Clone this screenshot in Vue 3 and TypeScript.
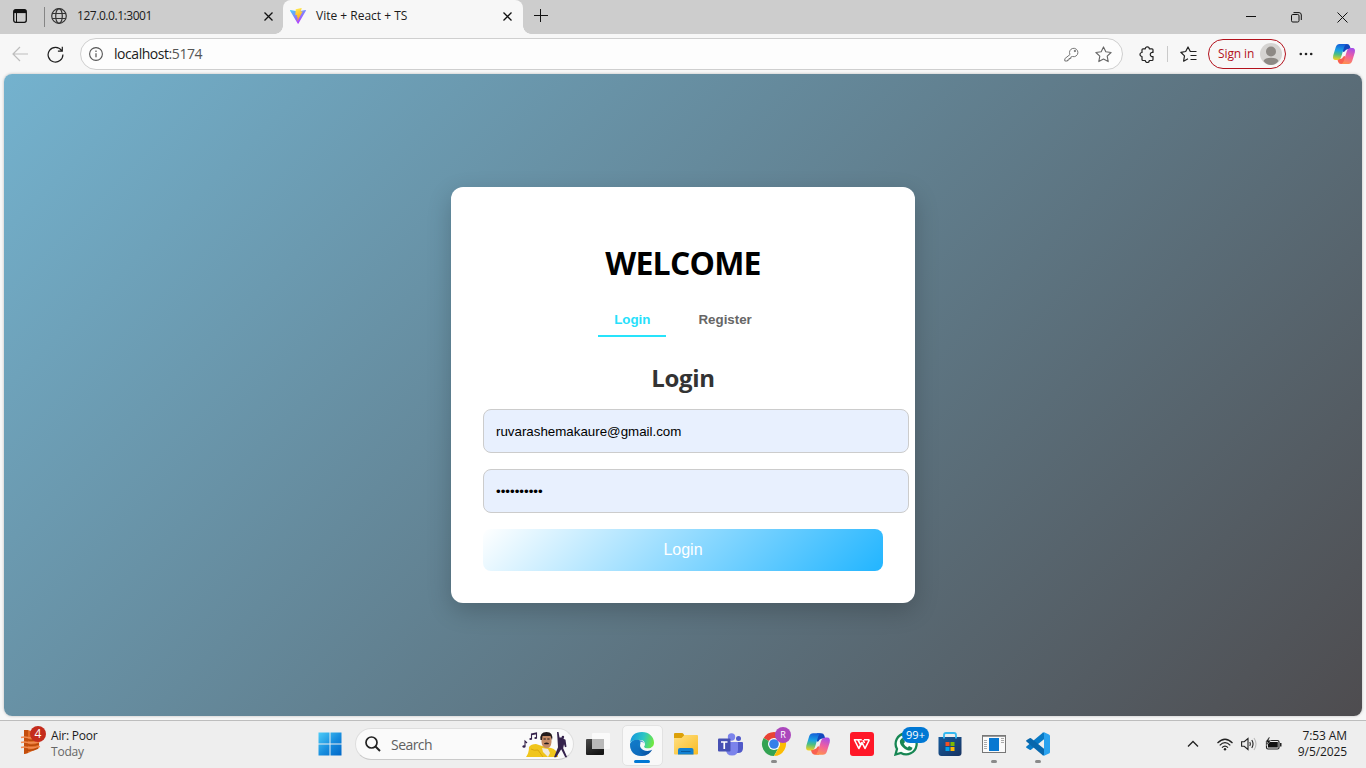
<script setup lang="ts">
import { ref } from 'vue'

type Mode = 'Login' | 'Register'
const modes: Mode[] = ['Login', 'Register']
const mode = ref<Mode>('Login')
const email = ref('ruvarashemakaure@gmail.com')
const password = '••••••••••'
</script>

<template>
  <div class="screen">
    <svg class="defs" width="0" height="0" aria-hidden="true">
      <defs>
        <linearGradient id="cpA" x1=".4" y1="0" x2="0.3" y2="1">
          <stop offset="0" stop-color="#1560d8" /><stop offset=".4" stop-color="#1aa2e4" />
          <stop offset=".65" stop-color="#4dbf80" /><stop offset="1" stop-color="#f5d21f" />
        </linearGradient>
        <linearGradient id="cpB" x1=".6" y1="0" x2=".3" y2="1">
          <stop offset="0" stop-color="#ff8f50" /><stop offset=".5" stop-color="#f0609f" />
          <stop offset="1" stop-color="#a64de8" />
        </linearGradient>
        <symbol id="copilot" viewBox="0 0 24 24">
          <path d="M11 2h4q2.200 0 2.900 2.300L18.700 7H16.500Q13.500 7 12.600 9.500L11 10z" fill="#1448bd" />
          <path d="M11 2h4q2.200 0 2.900 2.300L18.700 7H16.500Q13.500 7 12.600 9.500L11 10z" fill="#f9604f" transform="rotate(180 12 12)" />
          <path d="M7.500 2H15q-2 .3-2.800 3L9.300 14.500Q8.300 18 5 18H3.500Q.3 18 1.200 13.500L3.800 5Q4.800 2 7.500 2z" fill="url(#cpA)" />
          <path d="M7.500 2H15q-2 .3-2.800 3L9.300 14.500Q8.300 18 5 18H3.500Q.3 18 1.200 13.500L3.800 5Q4.800 2 7.500 2z" fill="url(#cpB)" transform="rotate(180 12 12)" />
        </symbol>
      </defs>
    </svg>

    <header class="tabstrip">
      <svg class="ws" width="14" height="14" viewBox="0 0 14 14" fill="none" stroke="#111">
        <rect x=".7" y=".7" width="12.600" height="12.600" rx="2" stroke-width="1.300" />
        <path d="M1 2.500h12" stroke-width="3.200" /><path d="M3.500 4v9" />
      </svg>
      <i class="split"></i>
      <div class="tab old">
        <svg width="16" height="16" viewBox="0 0 16 16" fill="none" stroke="#333" stroke-width="1.200">
          <circle cx="8" cy="8" r="7.300" /><ellipse cx="8" cy="8" rx="3.300" ry="7.300" /><path d="M1.200 5.500h13.600M1.200 10.500h13.600" />
        </svg>
        <span class="t1">127.0.0.1:3001</span>
        <svg class="x" width="9" height="9" viewBox="0 0 9 9" stroke="#111" stroke-width="1.300"><path d="m.5.5 8 8m0-8-8 8" /></svg>
      </div>
      <div class="tab active">
        <svg width="16" height="16" viewBox="0 0 32 32">
          <defs>
            <linearGradient id="v1" x1="0" y1="0" x2=".6" y2="1"><stop stop-color="#41d1ff" /><stop offset="1" stop-color="#bd34fe" /></linearGradient>
            <linearGradient id="v2" x1=".4" y1="0" x2=".6" y2="1"><stop stop-color="#ffea50" /><stop offset="1" stop-color="#ff9c10" /></linearGradient>
          </defs>
          <path d="M31.800 5.500 17 31.200a1 1 0 0 1-1.700 0L.2 5.500a1 1 0 0 1 1-1.500L16 6.800 30.700 4a1 1 0 0 1 1.100 1.500z" fill="url(#v1)" />
          <path d="m22.800.1-11 2.200a.5.5 0 0 0-.4.400l-.7 11.500c0 .3.300.5.600.4l3-.7-.9 4.500c0 .4.200.6.500.5l1.900-.6-1.500 7c0 .5.500.7.800.3L25 7.300c.1-.4-.1-.7-.5-.6l-3.200.6 2-6.700c.1-.3-.2-.6-.5-.5z" fill="url(#v2)" />
        </svg>
        <span class="t2">Vite + React + TS</span>
        <svg class="x" width="9" height="9" viewBox="0 0 9 9" stroke="#111" stroke-width="1.300"><path d="m.5.5 8 8m0-8-8 8" /></svg>
      </div>
      <svg class="plus" width="14" height="14" viewBox="0 0 14 14" stroke="#111"><path d="M6.500 0v13M0 6.500h14" /></svg>
      <div class="winctl">
        <svg width="10" height="10" viewBox="0 0 10 10" stroke="#111"><path d="M0 4.500h10" /></svg>
        <svg width="11" height="11" viewBox="0 0 11 11" fill="none" stroke="#111"><rect x=".5" y="2.500" width="7.500" height="7.500" rx="1.300" /><path d="M2.500.6H8Q10.300.6 10.300 3v5" /></svg>
        <svg width="11" height="11" viewBox="0 0 11 11" stroke="#111"><path d="m.5.5 10 10m0-10-10 10" /></svg>
      </div>
    </header>

    <nav class="toolbar">
      <svg class="back" width="17" height="16" viewBox="0 0 17 16" fill="none" stroke="#bdbdbd" stroke-width="1.200"><path d="M16 8H1M8 1 1 8l7 7" /></svg>
      <svg class="reload" width="17" height="17" viewBox="0 0 17 17" fill="none" stroke="#1e1e1e" stroke-width="1.200"><path d="M14.600 4.500A7.400 7.400 0 1 0 15.900 8.500M15.300.8v4.400h-4.400" /></svg>
      <div class="address">
        <svg width="14" height="14" viewBox="0 0 14 14" fill="none" stroke="#555"><circle cx="7" cy="7" r="6.400" stroke-width="1.100" /><path d="M7 6.200v4M7 3.600v1.300" stroke-width="1.200" /></svg>
        <span class="url">localhost<b>:5174</b></span>
        <svg class="key" width="15" height="15" viewBox="0 0 15 15" fill="none" stroke="#777"><path d="M6 7.500A4.200 4.200 0 1 1 8.400 9.500L6.800 10v1.500H5V13H3.500v1H.8v-2.300z" /><circle cx="10.900" cy="4" r=".7" fill="#777" /></svg>
        <svg width="17" height="17" viewBox="0 0 17 17" fill="none" stroke="#666" stroke-width="1.100" stroke-linejoin="round"><path d="m8.500.9 2.300 4.900 5.300.7-3.900 3.700 1 5.400-4.700-2.600-4.700 2.600 1-5.400L.9 6.500l5.300-.7z" /></svg>
      </div>
      <svg class="ext" width="16" height="17" viewBox="0 0 16 17" fill="none" stroke="#222" stroke-width="1.200" stroke-linejoin="round"><path d="M4 2.800h2.300a2 2 0 0 1 4 0H13q1 0 1 1V6.500a2.100 2.100 0 1 0 0 4v3q0 1-1 1h-2.700a2 2 0 0 1-4 0H4q-1 0-1-1v-3a2 2 0 1 1 0-4V3.800q0-1 1-1z" /></svg>
      <i class="rule"></i>
      <svg class="fav" width="17" height="17" viewBox="0 0 17 17" fill="none" stroke="#222" stroke-width="1.200" stroke-linejoin="round"><path d="M11.500 5.500h-1.200L8 1 5.700 5.500.8 6.300l3.700 3.600-.9 5.300 4.400-2.400M10.500 5.500h6M10.500 9.500h6M10.500 13.500h6" /></svg>
      <button class="signin"><span>Sign in</span>
        <svg width="22" height="22" viewBox="0 0 22 22"><circle cx="11" cy="11" r="11" fill="#d5d3d1" /><circle cx="11" cy="8.500" r="5" fill="#8d8985" /><path d="M3.500 18q1.500-3.300 7.500-3.300t7.500 3.300Q15.500 22 11 22t-7.500-4z" fill="#8d8985" /></svg>
      </button>
      <svg class="dots" width="14" height="4" viewBox="0 0 14 4" fill="#222"><circle cx="1.800" cy="2" r="1.300" /><circle cx="7" cy="2" r="1.300" /><circle cx="12.200" cy="2" r="1.300" /></svg>
      <svg class="cp" width="24" height="24"><use href="#copilot" /></svg>
    </nav>

    <main class="page">
      <section class="card">
        <h1><span>WELCOME</span></h1>
        <div class="modes">
          <button v-for="m in modes" :key="m" :class="{ on: m === mode }" @click="mode = m">{{ m }}</button>
        </div>
        <h2><span>{{ mode }}</span></h2>
        <div class="field">{{ email }}</div>
        <div class="field pw">{{ password }}</div>
        <button class="submit">{{ mode }}</button>
      </section>
    </main>

    <footer class="taskbar">
      <div class="weather">
        <svg width="28" height="32" viewBox="0 0 28 32">
          <path d="M5 5h4l11 4v14L9 28l-4 1z" fill="#e06b25" />
          <path d="M5 5h4v23l-4 1z" fill="#c44e0c" />
          <path d="M2 12.500q3-1 7 0t12-1M2 17.500q3-1 7 0t12-1M2 22.500q3-1 7 0t12-1" stroke="#f08a50" stroke-width="1.700" fill="none" />
          <path d="M9 14.800q5 1.500 11-1M9 19.800q5 1.500 11-1M8 25q5 1 11-2" stroke="#b94808" stroke-width="1.500" fill="none" />
          <circle cx="19" cy="9" r="8" fill="#c42b1c" /><text x="19" y="13.300" text-anchor="middle" class="n4">4</text>
        </svg>
        <div class="wt"><span>Air: Poor</span><span class="dim">Today</span></div>
      </div>
      <svg class="start" width="24" height="24" viewBox="0 0 24 24">
        <defs><linearGradient id="win" x1="0" y1="0" x2="1" y2="1"><stop stop-color="#4dccf8" /><stop offset=".55" stop-color="#168bdd" /><stop offset="1" stop-color="#0067c8" /></linearGradient></defs>
        <path d="M.5.500h11v11H.5zM12.500.500h11v11h-11zM.5 12.500h11v11H.5zM12.500 12.500h11v11h-11z" fill="url(#win)" />
      </svg>
      <div class="search">
        <svg width="16" height="16" viewBox="0 0 16 16" fill="none" stroke="#222" stroke-width="1.700"><circle cx="6.500" cy="6.500" r="5.500" /><path d="m10.500 10.500 4.500 4.500" stroke-width="2" /></svg>
        <span>Search</span>
        <svg class="art" width="46" height="27" viewBox="0 0 46 27">
          <path d="M9.500 8V3l5-1v5M9.500 3.800l5-1M3 15v-5l2 2" fill="none" stroke="#35234c" stroke-width="1.100" />
          <ellipse cx="8.700" cy="8" rx="1.400" ry="1.100" fill="#35234c" /><ellipse cx="13.700" cy="7" rx="1.400" ry="1.100" fill="#35234c" /><ellipse cx="2" cy="15.500" rx="1.600" ry="1.200" fill="#35234c" />
          <path d="M4 26q3-4 3-10 2-3 7-3l6 2 9 2q6 1 7 9z" fill="#f0c51b" /><path d="M9 18q3 2 7 1l5 7" fill="none" stroke="#d9a60c" />
          <path d="m20 17 6 1 2 4-2 4-5-5z" fill="#eee9e0" />
          <path d="M19.500 6q0-4 5-4t5 4v5q-.5 6-4.500 6-5 0-5.500-6z" fill="#c58a65" />
          <path d="M18.500 9q-1-8 6-8t5.500 8l-1.500-4h-8l-.5 4zM22 12.200q2.500-1.600 5 0l-.5 1.100h-4z" fill="#241b1c" /><path d="M21.500 8h2.300m1.500 0h2.300" stroke="#241b1c" />
          <path d="m35 1 1.500 0 1 5.500h2l.5-1.500q2-.7 2.200 1l-.7 1.700 2 1 1 7-1.500.5-1-3-.8 4 4 9h-2l-4-8-5 8H32l4-10-.5-8z" fill="#35234c" />
        </svg>
      </div>
      <div class="apps">
        <div class="slot">
          <svg width="26" height="26" viewBox="0 0 26 26"><defs><linearGradient id="tv" x1="0" y1="0" x2=".5" y2="1"><stop stop-color="#4c4c4c" /><stop offset="1" stop-color="#151515" /></linearGradient></defs>
            <rect x="1" y="8" width="18" height="16" rx="1" fill="url(#tv)" /><rect x="7" y="2" width="18" height="16" rx="1" fill="#fafafa" /><path d="M7 8h12v10H8q-1 0-1-1z" fill="#b9b9b9" /></svg>
        </div>
        <div class="slot current">
          <svg width="24" height="24" viewBox="0 0 24 24"><defs>
            <linearGradient id="ed1" x1="0" y1=".3" x2="1" y2=".5"><stop stop-color="#1598df" /><stop offset=".55" stop-color="#2dc6c4" /><stop offset="1" stop-color="#70e83f" /></linearGradient>
            <linearGradient id="ed2" x1="0" y1="0" x2=".8" y2="1"><stop stop-color="#1796dd" /><stop offset="1" stop-color="#0950a2" /></linearGradient></defs>
            <path d="M0 12Q3 6.500 9 7.500L13 17l9.300.5Q19 24 12 24 .5 24 0 12z" fill="url(#ed2)" />
            <path d="M.1 11Q1 0 12 0c7 0 12 5 12 10.500 0 4-3 6-6 6-4 0-4.500-1.500-3.500-3 1-2 0-5.500-4-5.500Q3 7 .1 11z" fill="url(#ed1)" />
            <path d="M14.500 13.500c-1 1.500-.5 3 3.500 3 2 0 3.700-.8 4.800-2.300v3q-2.300 1.800-5.300 1.800c-6.500 0-9.500-5.500-6-9 2.500 0 4 1.500 3 3.500z" fill="#f8f8f8" />
            <path d="M11.500 10Q6 11 8 16.500T16 23.300Q0 26 0 12q3-5 9.500-4 4 .5 5 4-1-2.200-3-2z" fill="#0f70c2" opacity=".65" /></svg>
          <i></i>
        </div>
        <div class="slot">
          <svg width="24" height="22" viewBox="0 0 24 22"><defs><linearGradient id="fo" x1="0" y1="0" x2="1" y2="1"><stop stop-color="#ffe083" /><stop offset="1" stop-color="#f9bb23" /></linearGradient></defs>
            <path d="M0 1q0-1 1-1h7q1 0 1.500 1l1 1.500V10H0z" fill="#dca008" /><path d="M0 5h7.500l3-3H23q1 0 1 1v17.500q0 1-1 1H1q-1 0-1-1z" fill="url(#fo)" /><path d="M4 21.500V17q0-2 2-2h11.500q2 0 2 2v4.500z" fill="#1180d1" /><path d="M7 18.500h9.500" stroke="#075a9e" stroke-width="1" /></svg>
        </div>
        <div class="slot">
          <svg width="25" height="23" viewBox="0 0 25 23"><circle cx="13.500" cy="4" r="3.700" fill="#7b83eb" /><circle cx="20.500" cy="5.500" r="2.500" fill="#5059c9" /><path d="M17 9h7q1 0 1 1v5q0 5-5 5h-3z" fill="#5059c9" /><path d="M8 9h12v7.500q0 6-6 6t-6-6z" fill="#7b83eb" /><rect x="0" y="5.500" width="12.500" height="13" rx="1" fill="#4650b3" /><path d="M3 9h6.500M6.250 9v7" stroke="#fff" stroke-width="1.700" /></svg>
        </div>
        <div class="slot run">
          <svg width="30" height="30" viewBox="0 0 30 30"><circle cx="13" cy="18" r="12" fill="#fff" /><path d="M13 18 2.600 12A12 12 0 0 1 23.400 12z" fill="#e94335" /><path d="M13 18h0L2.600 12A12 12 0 0 0 13 30l5-9z" fill="#34a353" /><path d="M13 12h10.400A12 12 0 0 1 13 30l5.200-9z" fill="#fbbc05" /><circle cx="13" cy="18" r="6" fill="#fff" /><circle cx="13" cy="18" r="4.800" fill="#357fe9" /><circle cx="22" cy="9" r="8" fill="#ab47bc" /><text x="22" y="12.200" class="r" text-anchor="middle">R</text></svg>
          <i></i>
        </div>
        <div class="slot"><svg width="26" height="26"><use href="#copilot" /></svg></div>
        <div class="slot">
          <svg width="24" height="24" viewBox="0 0 24 24"><rect width="24" height="24" rx="3" fill="#ff1728" /><path d="M3.800 7.800h8M19.500 7.800h-5.500M4.500 8l4.300 8.500 3.200-6 3 6L19.300 8M8 8l2.500 4.500M13 8l1.500 3" fill="none" stroke="#fff" stroke-width="1.600" stroke-linejoin="round" /></svg>
        </div>
        <div class="slot wa">
          <svg width="24" height="24" viewBox="0 0 24 24"><path d="M1.500 22.500 3 17A10.500 10.500 0 1 1 7 21z" fill="#f9fffa" stroke="#168653" stroke-width="2.300" /><path d="M7.500 6.500 9 6l2 4-1.300 1.700q1.500 3 4 3.800L15 14l3.500 1.700c-.5 3-3 3.300-5 2.500C9 16.500 5 12 6 8.500z" fill="#168653" /></svg>
          <span class="badge">99+</span>
        </div>
        <div class="slot">
          <svg width="24" height="24" viewBox="0 0 24 24"><defs><linearGradient id="st" x1="0" y1="0" x2="1" y2="1"><stop stop-color="#155b9d" /><stop offset="1" stop-color="#193360" /></linearGradient></defs><path d="M.5 5h23v16q0 3-3 3h-17q-3 0-3-3z" fill="url(#st)" /><path d="M6 6.500V3q0-2 2-2h8q2 0 2 2v3.500" fill="none" stroke="#35b9f1" stroke-width="1.800" /><path d="M7.500 10h4v4h-4z" fill="#f25022" /><path d="M12.500 10h4v4h-4z" fill="#7fba00" /><path d="M7.500 15h4v4h-4z" fill="#00a4ef" /><path d="M12.500 15h4v4h-4z" fill="#ffb900" /></svg>
        </div>
        <div class="slot run">
          <svg width="24" height="18" viewBox="0 0 24 18"><rect x=".5" y=".5" width="23" height="17" fill="#fafafa" stroke="#777" /><path d="M1 1.500h22" stroke="#999" /><path d="M7 3h10v13H7z" fill="#0878d1" /><path d="M2 5.500h3M2 7.500h3M2 9.500h3M2 11.500h3M2 13.500h3M19 5.500h3M19 7.500h3M19 3.500h3" stroke="#aaa" /></svg>
          <i></i>
        </div>
        <div class="slot run">
          <svg width="24" height="24" viewBox="0 0 24 24"><path d="m18 7.300-13 10.500q-.7.500-1.400 0L.4 15.800q-.6-.6 0-1.200L17 .5l1.500.5z" fill="#0879c5" /><path d="M18 16.700 5 6.200q-.7-.5-1.400 0L.4 8.200q-.6.600 0 1.200L17 23.500l1.500-.5z" fill="#0867ac" /><path d="m17.500.1 5.500 2.500q1 .5 1 1.500v15.800q0 1-1 1.500l-5.500 2.500q-1 .2-1.300-.3 1.800.7 1.800-1.200V1.600q0-2-1.800-1.200.3-.5 1.300-.3z" fill="#29a2ef" /></svg>
          <i></i>
        </div>
      </div>
      <div class="tray">
        <svg width="12" height="8" viewBox="0 0 12 8" fill="none" stroke="#222" stroke-width="1.300"><path d="m1 6.500 5-5 5 5" /></svg>
        <svg class="wifi" width="16" height="13" viewBox="0 0 16 13" fill="none" stroke="#222" stroke-width="1.200"><path d="M.5 5q7.500-7.500 15 0M2.700 7.400q5.300-5.300 10.600 0M5 9.700q3-3 6 0" /><circle cx="8" cy="11.300" r="1.200" fill="#222" stroke="none" /></svg>
        <svg class="vol" width="16" height="14" viewBox="0 0 16 14" fill="none" stroke="#222" stroke-width="1.100"><path d="M.6 4.700h2.600L7 1.500v11L3.200 9.300H.6zM8.800 5q1.200 2 0 4M10.800 3q2.500 4 0 8" /><path d="M13 1q4 6 0 12" stroke="#bbb" /></svg>
        <svg class="bat" width="17" height="14" viewBox="0 0 17 14"><rect x="1.500" y="3.500" width="12.500" height="8.500" rx="1.500" fill="none" stroke="#222" stroke-width="1.200" /><path d="M4 5h8.800v5.500H3V7z" fill="#111" /><path d="M15 6h1.500v3.500H15z" fill="#222" /><path d="M4 0 .5 5h2L1.500 8.500 6 3.500H3.500L5 0z" fill="#111" stroke="#eee" stroke-width=".4" /></svg>
        <div class="clock"><span>7:53 AM</span><span>9/5/2025</span></div>
      </div>
    </footer>
  </div>
</template>

<style>
body { overflow: hidden; }
</style>

<style scoped>
* { box-sizing: border-box; }
.screen { width: 1366px; height: 768px; background: #f7f7f7; font-family: "Open Sans", "Noto Sans", sans-serif; display: flex; flex-direction: column; overflow: hidden; color: #1b1b1b; }
svg { display: block; flex: none; }
.defs { position: absolute; }
button { border: 0; background: none; padding: 0; }

.tabstrip { height: 34px; background: #cdcdcd; display: flex; align-items: center; flex: none; }
.ws { margin-left: 13px; margin-top: -2px; }
.split { width: 1px; height: 20px; background: #858585; margin-left: 17px; }
.tab { height: 34px; display: flex; align-items: center; padding-bottom: 2px; font-size: 12px; line-height: 16px; white-space: nowrap; }
.tab span { padding-bottom: 1px; }
.tab .x { margin-left: auto; }
.old { width: 238px; padding-left: 6px; padding-right: 10px; background: #cdcdcd; }
.t1 { margin-left: 10px; letter-spacing: -.45px; }
.active { width: 240px; background: #f7f7f7; border-radius: 8px 8px 0 0; padding-left: 7px; padding-right: 11px; position: relative; }
.active::before, .active::after { content: ""; position: absolute; bottom: 0; width: 8px; height: 8px; }
.active::before { left: -8px; background: radial-gradient(circle at 0 0, transparent 7.500px, #f7f7f7 8px); }
.active::after { right: -8px; background: radial-gradient(circle at 100% 0, transparent 7.500px, #f7f7f7 8px); }
.t2 { margin-left: 10px; letter-spacing: 0; }
.plus { margin-left: 11px; margin-top: -2px; }
.winctl { margin-left: auto; display: flex; align-items: center; gap: 35px; padding-right: 18px; }

.toolbar { height: 40px; flex: none; display: flex; align-items: center; background: #f7f7f7; }
.back { margin-left: 12px; }
.reload { margin-left: 18px; }
.address { margin-left: 17px; width: 1043px; height: 32px; border: 1px solid #cfcfcf; border-radius: 16px; background: #fdfdfd; display: flex; align-items: center; padding: 0 10px 0 8px; margin-left: 16px; }
.url { margin-left: 11px; font-size: 14px; line-height: 18px; padding-bottom: 1px; letter-spacing: -.45px; color: #1b1b1b; }
.url b { font-weight: 400; color: #555; }
.key { margin-left: auto; margin-right: 16px; }
.ext { margin-left: 16px; }
.rule { width: 1px; height: 16px; background: #cacaca; margin-left: 12px; }
.fav { margin-left: 12px; }
.signin { margin-left: 11px; width: 78px; height: 30px; border: 1px solid #b3121d; border-radius: 15px; display: flex; align-items: center; justify-content: space-between; padding: 0 3px 0 9px; color: #b3121d; font: 12px/16px "Open Sans", sans-serif; }
.signin span { letter-spacing: -.1px; white-space: nowrap; padding-bottom: 1px; }
.dots { margin-left: 13px; }
.cp { margin-left: 19px; }

.page { flex: none; height: 642px; margin: 0 4px; border-radius: 8px; background: linear-gradient(135deg, #74b2ce, #4e4c4f); box-shadow: 0 0 3px rgba(0, 0, 0, .25); display: flex; align-items: center; justify-content: center; }
.card { width: 464px; height: 416px; background: #fff; border-radius: 12px; padding: 32px; box-shadow: 0 8px 24px rgba(0, 0, 0, .2); display: flex; flex-direction: column; align-items: flex-start; }
h1 { width: 100%; margin: 22px 0 18px; height: 44px; line-height: 44px; font-size: 32px; font-weight: 700; text-align: center; color: #000; letter-spacing: -.8px; }
.modes { width: 100%; height: 34px; display: flex; justify-content: center; gap: 16px; }
.modes button { height: 34px; padding: 0 16px; font: bold 13.333px "Liberation Sans", Arial, sans-serif; color: #666; border-bottom: 2px solid transparent; }
.modes .on { color: #26dffb; border-bottom-color: #26e3fb; }
h2 { width: 100%; margin: 25px 0 15px; height: 32px; line-height: 32px; font-size: 24px; font-weight: 700; text-align: center; color: #333; letter-spacing: -.3px; }
.field { width: 426px; height: 44px; flex: none; margin-bottom: 16px; border: 1px solid #ccc; border-radius: 8px; background: #e8f0fe; padding: 0 12px; line-height: 43px; font-family: "Liberation Sans", Arial, sans-serif; font-size: 13.333px; color: #000; }
.submit { width: 400px; height: 42px; flex: none; border-radius: 8px; color: #fff; font: 16px "Liberation Sans", Arial, sans-serif; background: linear-gradient(135deg, #fff, #22b5ff); }

.taskbar { margin-top: 4px; height: 48px; flex: none; background: #eee; border-top: 1px solid #bdbdbd; display: flex; align-items: center; padding-bottom: 1px; }
.weather { width: 317px; height: 46px; display: flex; padding: 4px 0 0 19px; }
.wt { display: flex; flex-direction: column; margin: 3px 0 0 4px; font-size: 12px; line-height: 16px; letter-spacing: -.2px; }
.dim { color: #666; }
.n4 { fill: #fff; font-size: 12px; }
.start { margin-left: 1px; }
.search { margin-left: 13px; width: 219px; height: 32px; border-radius: 16px; border: 1px solid #dedede; border-bottom-color: #cacaca; background: #fafafa; display: flex; align-items: center; padding: 0 5px 0 9px; font-size: 14px; color: #606060; letter-spacing: -.55px; }
.search span { margin-left: 10px; }
.art { margin-left: auto; }
.apps { display: flex; margin-left: 2px; }
.slot { width: 44px; height: 46px; display: flex; align-items: center; justify-content: center; position: relative; }
.slot > svg { position: relative; }
.slot i { position: absolute; bottom: 4px; left: 19px; width: 6px; height: 3px; border-radius: 2px; background: #8a8a8a; }
.current::before { content: ""; position: absolute; left: 2px; top: 4px; width: 39px; height: 39px; border-radius: 5px; background: #f8f8f8; border: 1px solid #e2e2e2; }
.slot.current i { left: 14px; width: 16px; background: #0078d4; }
.r { fill: #fff; font-size: 9px; }
.run > svg[width="30"] { margin: -6px 0 0 4px; }
.badge { position: absolute; left: 18px; top: 6px; width: 27px; height: 16px; border-radius: 8px; background: #0078d4; color: #fff; font-size: 11px; line-height: 15px; text-align: center; }
.tray { margin-left: auto; display: flex; align-items: center; padding-right: 19px; }
.wifi { margin-left: 18px; }
.vol { margin-left: 8px; }
.bat { margin-left: 8px; }
.clock { width: 65px; display: flex; flex-direction: column; align-items: flex-end; font-size: 12px; line-height: 16px; letter-spacing: -.1px; }
</style>
